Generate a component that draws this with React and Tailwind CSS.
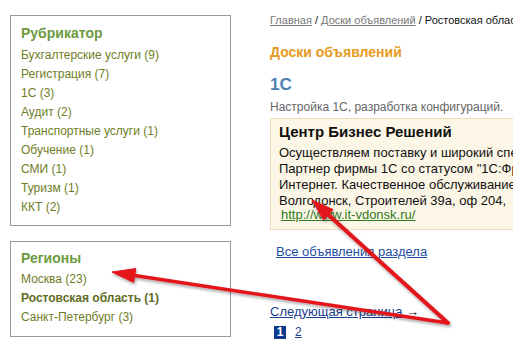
import React from "react";

const rubrics = [
  "Бухгалтерские услуги (9)",
  "Регистрация (7)",
  "1С (3)",
  "Аудит (2)",
  "Транспортные услуги (1)",
  "Обучение (1)",
  "СМИ (1)",
  "Туризм (1)",
  "ККТ (2)",
];

const regions = [
  { name: "Москва (23)", active: false },
  { name: "Ростовская область (1)", active: true },
  { name: "Санкт-Петербург (3)", active: false },
];

function Arrows() {
  return (
    <svg
      className="absolute inset-0 pointer-events-none"
      width="513"
      height="349"
      viewBox="0 0 513 349"
    >
      <defs>
        <filter id="sh" x="-10%" y="-10%" width="120%" height="120%">
          <feDropShadow dx="1" dy="2" stdDeviation="1.5" floodColor="#000" floodOpacity="0.35" />
        </filter>
      </defs>
      <g filter="url(#sh)" fill="#e3141b" stroke="#e3141b">
        {/* to the link in the card */}
        <line x1="448" y1="323" x2="328.3" y2="214.8" strokeWidth="4" strokeLinecap="round" />
        <polygon points="312,200 333,209.6 323.6,220" strokeWidth="1" />
        {/* to the regions box */}
        <line x1="448" y1="323" x2="134.7" y2="275.5" strokeWidth="3.5" strokeLinecap="round" />
        <polygon points="112,272 135.8,268.5 133.7,282.4" strokeWidth="1" />
      </g>
    </svg>
  );
}

export default function App() {
  return (
    <div className="relative w-[513px] h-[349px] overflow-hidden bg-white flex font-['Liberation_Sans',Arial,sans-serif]">
      {/* left column */}
      <div className="w-[270px] shrink-0 pl-[10px] pt-[15px]">
        <div className="w-[221px] border border-[#999] pl-[10px] pt-[8px] pb-[8px]">
          <div className="text-[14px] leading-[18px] font-bold text-[#6d9a40] mb-[4px]">Рубрикатор</div>
          {rubrics.map((r) => (
            <div key={r} className="text-[12px] leading-[19px] text-[#6f7d26]">
              {r}
            </div>
          ))}
        </div>

        <div className="w-[221px] border border-[#999] pl-[10px] pt-[7px] pb-[9px] mt-[15px]">
          <div className="text-[14px] leading-[18px] font-bold text-[#6d9a40] mb-[3px]">Регионы</div>
          {regions.map((r) => (
            <div
              key={r.name}
              className={
                r.active
                  ? "text-[12px] leading-[19px] font-bold text-[#5f6d1f]"
                  : "text-[12px] leading-[19px] text-[#6f7d26]"
              }
            >
              {r.name}
            </div>
          ))}
        </div>
      </div>

      {/* right column */}
      <div className="flex-1 min-w-0 pt-[12px] whitespace-nowrap">
        <div className="text-[11px] leading-[16px] text-[#111]">
          <span className="underline text-[#777]">Главная</span> /{" "}
          <span className="underline text-[#777]">Доски объявлений</span> / Ростовская область
        </div>

        <div className="mt-[15px] text-[14px] leading-[18px] font-bold text-[#e69a1e]">Доски объявлений</div>

        <div className="mt-[14px] text-[17px] leading-[20px] font-bold text-[#4f80b3]">1С</div>

        <div className="mt-[4px] text-[12px] leading-[16px] text-[#666]">
          Настройка 1С, разработка конфигураций.
        </div>

        <div className="mt-[3px] w-[300px] border border-[#f0dcb6] bg-[#fcf6e6] pl-[8px] pt-[3px] pb-[7px] text-[#111]">
          <div className="text-[15px] leading-[20px] font-bold">Центр Бизнес Решений</div>
          <div className="mt-[3px] text-[13px] leading-[16px]">
            <div>Осуществляем поставку и широкий спектр услуг</div>
            <div>Партнер фирмы 1С со статусом "1С:Франчайзи".</div>
            <div>Интернет. Качественное обслуживание клиентов.</div>
            <div className="leading-[15px]">Волгодонск, Строителей 39а, оф 204,</div>
            <div className="pl-[2px] leading-[14px]">
              <span className="underline text-[#2f7a1c]">http://www.it-vdonsk.ru/</span>
            </div>
          </div>
        </div>

        <div className="mt-[14px] pl-[6px] text-[13px] leading-[16px]">
          <span className="underline text-[#1f4f9f]">Все объявления раздела</span>
        </div>

        <div className="mt-[44px] text-[13px] leading-[16px] text-[#1a3d8c]">
          <span className="underline">Следующая страница</span> <span className="text-[#111]">→</span>
        </div>

        <div className="mt-[3px] flex items-center gap-[9px] pl-[4px] text-[12px]">
          <span className="w-[12px] h-[13px] bg-[#0b3a8c] text-white font-bold flex items-center justify-center leading-none">
            1
          </span>
          <span className="underline text-[#1a3d8c]">2</span>
        </div>
      </div>

      <Arrows />
    </div>
  );
}
